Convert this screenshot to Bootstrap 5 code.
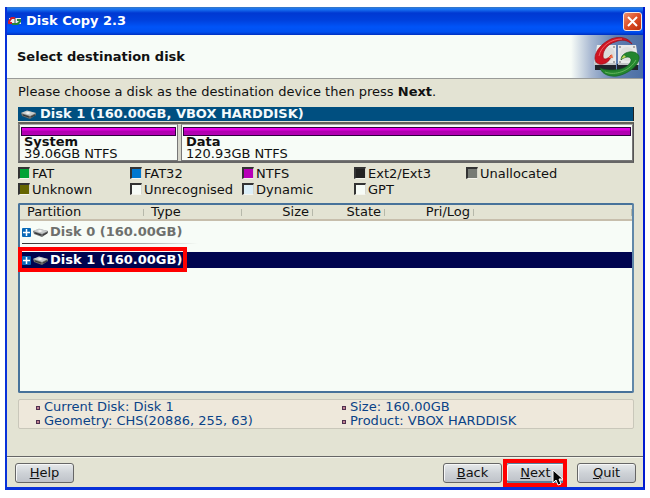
<!DOCTYPE html>
<html lang="en">
<head>
<meta charset="utf-8">
<meta name="viewport" content="width=device-width, initial-scale=1">
<title>Disk Copy 2.3</title>
<link href="https://cdn.jsdelivr.net/npm/bootstrap@5.3.0/dist/css/bootstrap.min.css" rel="stylesheet">
<style>
body{font:13px/16px "DejaVu Sans",sans-serif;color:#111;background:#fff}
.shell{padding:7px 5px 8px}
.win{background:#e3e3d3;border:2px solid #0831d9;border-top:0;border-bottom-width:3px;border-right-color:#0019cf}
.titlebar{height:28px;padding:0 1px;color:#fff;background:linear-gradient(#3c77c0 0,#1a78f5 2px,#0038d2 6px,#0040dc 13px,#0054f8 20px,#0050f0 25px,#002fc0 28px)}
.titlebar h1,.banner h2{font-size:13px;line-height:16px;font-weight:700}
.shut{width:19px;height:19px;border:1px solid #f6e8e0;border-radius:3px;background:linear-gradient(135deg,#ee8f6c,#dd4d25 50%,#b92e0c)}
.banner{height:44px;background:#f7fcf7;border-bottom:1px solid #999b98;padding-left:10px}
.emblem{width:72px;height:43px;padding-right:2px;background:linear-gradient(90deg,#f7fcf7 0,#a9b9d2 20px,#5f7fb0 45px,#4c6fa5)}
.content{padding:5px 9px 0 11px}
.diskbar{height:14px;line-height:12px;background:#004f80;color:#f4fafc;font-weight:700;margin-top:7px;padding-left:3px;border-right:1px solid #222}
.parts{height:41px;margin-top:1px;gap:3px;background:#d5d5ca;border:1px solid #777;border-width:2px 1px;border-color:#626258 #555 #666 #777}
.part{background:#f7fcf7;border:1px solid #777;border-top-color:#aaa;padding:2px 1px 0;line-height:12px}
.part .fill{height:9px;border:1px solid #300040;background:linear-gradient(#e800e8 0,#e000e0 2px,#b000b0 3px,#b400b4)}
.part b,.part span{display:block;padding-left:3px}
.p1{flex:0 0 26%;max-width:159px}
.legend{display:grid;grid-template-columns:repeat(5,112px);margin:3px 0 0}
.legend li{display:flex;gap:2px;line-height:16px;white-space:nowrap}
.sw{width:12px;height:12px;margin-top:1px;border:2px solid #333;border-width:2px 1px 1px 2px;border-color:#333 #d7d7cd #f5f5ee #333}
.fat{background:#00a336}.fat32{background:#0078d0}.ntfs{background:#b800b8}.ext{background:#222}.unal{background:#777b75}.unk{background:#656500}.unr,.gpt{background:#f7fcf7}.dyn{background:#dceff8}
.grid-box{margin-top:5px;border:2px solid #47729a;border-right-color:#6087a9;border-radius:2px;background:#f7fcf7;position:relative}
.disks{width:100%;table-layout:fixed;border-collapse:separate;border-spacing:0}
.disks th{height:16px;line-height:14px;padding:0 4px 0 7px;font-weight:400;background:linear-gradient(90deg,#b6b8aa,#b6b8aa) right 4px/1px 7px no-repeat,#e3e3d3;border-bottom:2px solid #c7beac;white-space:nowrap}
.disks td{padding:0 0 0 2px;height:16px;line-height:16px;font-weight:700;white-space:nowrap}
.disks td>div{gap:2px}
.disks .off td{height:31px;padding-top:3px;vertical-align:top;color:#6e706d}
.disks .off td:after{content:"";display:block;width:176px;height:1px;margin-top:3px;background:linear-gradient(90deg,#333,#aaa 70%,transparent)}
.disks .on td{background:#00044f;color:#fff}
.c1{width:124px}.c2{width:98px}.c3{width:71px}.c4{width:72px}.c5{width:89px}
.mark-row{position:absolute;left:-2px;top:42px;width:169px;height:25px;border:4px solid #f00;pointer-events:none}
.info{margin-top:6px;padding:0 17px;border:1px solid #c9c7ba;border-radius:2px;background:#eee8db;color:#0a4387}
.info ul{line-height:14px}
.info li:before{content:"";display:inline-block;width:4px;height:4px;margin-right:4px;border:1px solid #503050;background:#c08090;vertical-align:1px}
.foot{margin-top:27px;border-top:1px solid #666;box-shadow:inset 0 1px #f4f4ea;padding:6px 7px 4px 8px}
.key{width:59px;height:20px;padding:0;border:1px solid #666;border-radius:3px;color:#111;line-height:16px;font-size:13px;background:linear-gradient(#e6e9ea,#ced2d7 50%,#bfc3c9);box-shadow:inset 1px 1px #f6f7f7}
.key:hover{color:#111;background:#dde1e4;border-color:#666}
.focus-key{border-color:#56809f;border-bottom-width:2px}
.mark-btn{position:absolute;inset:-4px -2px -4px -3px;border:4px solid #f00;pointer-events:none}
.cursor{position:absolute;right:1px;top:6px;pointer-events:none}
</style>
<script src="https://cdn.jsdelivr.net/npm/bootstrap@5.3.0/dist/js/bootstrap.bundle.min.js"></script>
</head>
<body>
<svg width="0" height="0" class="position-absolute" aria-hidden="true">
<defs>
<symbol id="drive" viewBox="0 0 15 9"><path d="M0 3 6 1l9 2v2L9 9 1 6z" fill="#686b6b"/><path d="M0 3 6 .5 15 3 9 6z" fill="#c6caca"/><path d="M4 3 7 2l3 1-3 1z" fill="#f8faf8"/><path d="M2 5l6 2M10 7l4-2" stroke="#333"/></symbol>
<symbol id="plus" viewBox="0 0 9 9"><rect width="9" height="9" rx="1" fill="#0869b7"/><path d="M4.500 1v7M1 4.500h7" stroke="#fff" stroke-width="1.500"/></symbol>
<symbol id="swap" viewBox="0 0 48 42"><path d="M2 28h21v6H2zM24 28h21v6H24z" fill="#20242b"/><path d="M4 9h19v20H1zM25 9h18l3 20H25z" fill="#e9eae9"/><path d="M1 27h22v2H1zM25 27h21v2H25z" fill="#c2c5c7"/><ellipse cx="15" cy="18" rx="7" ry="7" fill="#dcdddb"/><ellipse cx="34" cy="18" rx="7" ry="7" fill="#dfe0dd"/><g fill="#555"><circle cx="3" cy="26" r=".8"/><circle cx="21" cy="26" r=".8"/><circle cx="27" cy="26" r=".8"/><circle cx="43" cy="26" r=".8"/><circle cx="21" cy="11" r=".8"/><circle cx="27" cy="11" r=".8"/><circle cx="41" cy="11" r=".8"/></g><path d="M39 8C35 1 26 0 18 3 9 7 2 15 2 22c0 5 4 7 8 6 5-1 8-5 8-9-3 4-8 6-8 1 0-6 5-12 12-14 7-3 12-2 17 2z" fill="#cf1422" stroke="#98101a" stroke-width=".7"/><path d="M7 32c2 6 9 9 17 8 11-2 21-10 22-17 1-5-4-8-10-7-5 1-8 4-8 8 4-4 11-4 10 1-2 6-10 9-18 9-5 0-9 0-13-2z" fill="#24862f" stroke="#126021" stroke-width=".7"/><path d="M6 20C8 10 18 3 29 3" fill="none" stroke="#ee6268"/><path d="M12 36c10 4 25-1 31-12" fill="none" stroke="#64b55d"/><path d="m15 22 4-4 1 4z" fill="#f07046"/><path d="m28 23 3-4 2 2z" fill="#c7d75a"/></symbol>
</defs>
</svg>
<div class="shell min-vh-100 d-flex flex-column">
<main class="win flex-grow-1 d-flex flex-column">
<header class="titlebar d-flex align-items-center">
<svg width="14" height="10" viewBox="0 0 14 10" aria-hidden="true"><path d="M1 2h12v6H1z" fill="#eee"/><path d="M7 1H3L0 5v3h4V6H2l2-3h3z" fill="#d21a2d"/><path d="M4 9h6l3-3V3H9v2h2L9 7H4z" fill="#26843a"/><path d="M7 2v5" stroke="#456"/></svg>
<h1 class="mb-0 ms-1 flex-grow-1">Disk Copy 2.3</h1>
<button type="button" class="shut p-0 d-flex align-items-center justify-content-center" aria-label="Close"><svg width="13" height="13" viewBox="0 0 13 13"><path d="m2 2 9 9M11 2l-9 9" stroke="#fff" stroke-width="2"/></svg></button>
</header>
<div class="banner d-flex align-items-center justify-content-between"><h2 class="mb-0">Select destination disk</h2><div class="emblem d-flex justify-content-end align-items-center"><svg width="48" height="42" aria-hidden="true"><use href="#swap"/></svg></div></div>
<div class="content flex-grow-1 d-flex flex-column">
<p class="mb-0">Please choose a disk as the destination device then press <b>Next</b>.</p>
<div class="diskbar d-flex align-items-center"><svg width="15" height="9" class="me-1" aria-hidden="true"><use href="#drive"/></svg>Disk 1 (160.00GB, VBOX HARDDISK)</div>
<div class="parts d-flex">
<div class="part p1"><div class="fill"></div><b>System</b><span>39.06GB NTFS</span></div>
<div class="part flex-grow-1"><div class="fill"></div><b>Data</b><span>120.93GB NTFS</span></div>
</div>
<ul class="legend list-unstyled">
<li><i class="sw fat"></i>FAT</li><li><i class="sw fat32"></i>FAT32</li><li><i class="sw ntfs"></i>NTFS</li><li><i class="sw ext"></i>Ext2/Ext3</li><li><i class="sw unal"></i>Unallocated</li>
<li><i class="sw unk"></i>Unknown</li><li><i class="sw unr"></i>Unrecognised</li><li><i class="sw dyn"></i>Dynamic</li><li><i class="sw gpt"></i>GPT</li>
</ul>
<div class="grid-box flex-grow-1">
<table class="disks">
<colgroup><col class="c1"><col class="c2"><col class="c3"><col class="c4"><col class="c5"><col></colgroup>
<thead><tr><th>Partition</th><th>Type</th><th class="text-end">Size</th><th class="text-end">State</th><th class="text-end">Pri/Log</th><th></th></tr></thead>
<tbody>
<tr class="off"><td colspan="6"><div class="d-flex align-items-center"><svg width="9" height="9" aria-hidden="true"><use href="#plus"/></svg><svg width="15" height="9" aria-hidden="true"><use href="#drive"/></svg><span>Disk 0 (160.00GB)</span></div></td></tr>
<tr class="on"><td colspan="6"><div class="d-flex align-items-center"><svg width="9" height="9" aria-hidden="true"><use href="#plus"/></svg><svg width="15" height="9" aria-hidden="true"><use href="#drive"/></svg><span>Disk 1 (160.00GB)</span></div></td></tr>
</tbody>
</table>
<div class="mark-row"></div>
</div>
<div class="info row g-0">
<ul class="col-6 list-unstyled mb-0"><li>Current Disk: Disk 1</li><li>Geometry: CHS(20886, 255, 63)</li></ul>
<ul class="col-6 list-unstyled mb-0 ps-3"><li>Size: 160.00GB</li><li>Product: VBOX HARDDISK</li></ul>
</div>
</div>
<footer class="foot d-flex justify-content-between">
<button type="button" class="btn key"><u>H</u>elp</button>
<div class="d-flex gap-1">
<button type="button" class="btn key"><u>B</u>ack</button>
<div class="position-relative me-2"><button type="button" class="btn key focus-key"><u>N</u>ext</button><div class="mark-btn"></div><svg class="cursor" width="12" height="18" viewBox="0 0 12 18" aria-hidden="true"><path d="M1 1v13l3-3 2 5 3-1-2-5h4z" fill="#080808" stroke="#fff"/></svg></div>
<button type="button" class="btn key"><u>Q</u>uit</button>
</div>
</footer>
</main>
</div>
</body>
</html>
